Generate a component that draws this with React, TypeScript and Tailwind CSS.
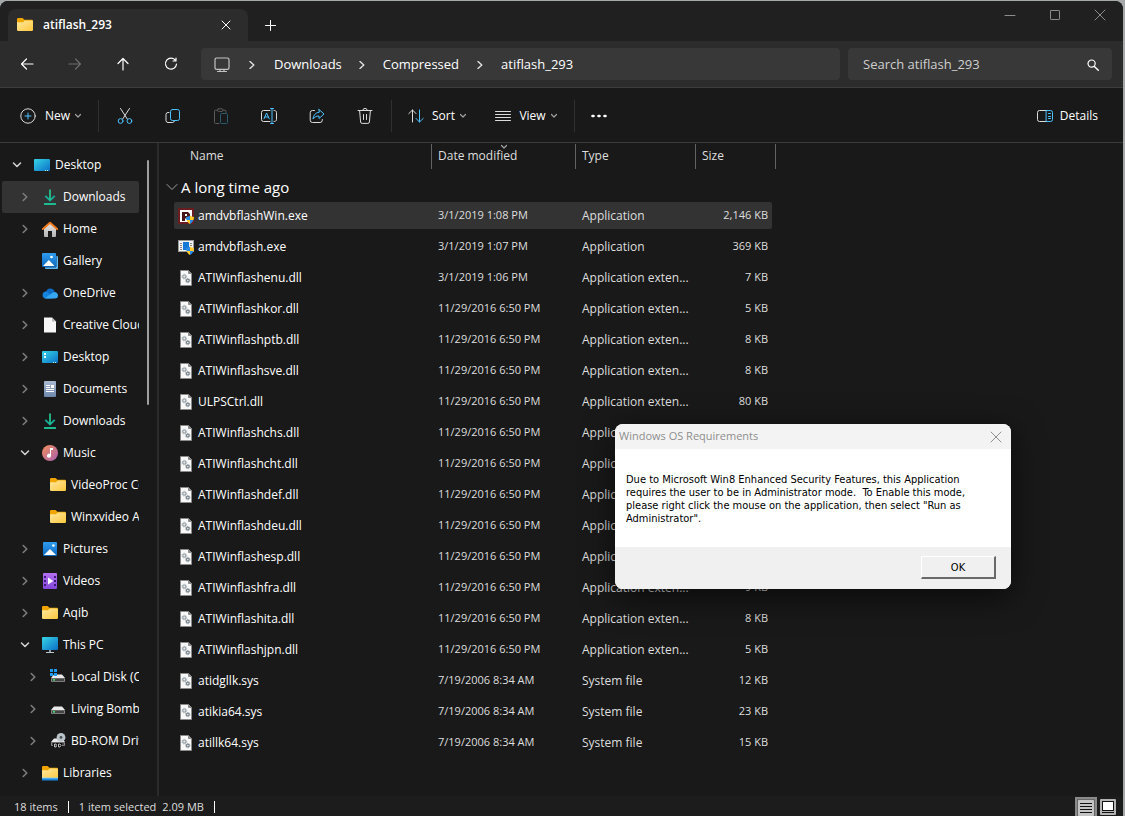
import type { ReactNode } from "react";

type Kind = "desktop" | "folderView" | "download" | "home" | "gallery" | "onedrive" | "blank" | "documents" | "music" | "folder" | "pictures" | "videos" | "pc" | "disk" | "drive" | "bdrom" | "libraries";

const navItems: { label: string; icon: Kind; level: 0 | 1 | 2; state: "open" | "closed" | "none"; active?: boolean }[] = [
  { label: "Desktop", icon: "desktop", level: 0, state: "open" },
  { label: "Downloads", icon: "download", level: 1, state: "closed", active: true },
  { label: "Home", icon: "home", level: 1, state: "closed" },
  { label: "Gallery", icon: "gallery", level: 1, state: "none" },
  { label: "OneDrive", icon: "onedrive", level: 1, state: "closed" },
  { label: "Creative Cloud", icon: "blank", level: 1, state: "closed" },
  { label: "Desktop", icon: "folderView", level: 1, state: "closed" },
  { label: "Documents", icon: "documents", level: 1, state: "closed" },
  { label: "Downloads", icon: "download", level: 1, state: "closed" },
  { label: "Music", icon: "music", level: 1, state: "open" },
  { label: "VideoProc Co", icon: "folder", level: 2, state: "none" },
  { label: "Winxvideo AI", icon: "folder", level: 2, state: "none" },
  { label: "Pictures", icon: "pictures", level: 1, state: "closed" },
  { label: "Videos", icon: "videos", level: 1, state: "closed" },
  { label: "Aqib", icon: "folder", level: 1, state: "closed" },
  { label: "This PC", icon: "pc", level: 1, state: "open" },
  { label: "Local Disk (C", icon: "disk", level: 2, state: "closed" },
  { label: "Living Bomb", icon: "drive", level: 2, state: "closed" },
  { label: "BD-ROM Driv", icon: "bdrom", level: 2, state: "closed" },
  { label: "Libraries", icon: "libraries", level: 1, state: "closed" },
];

const levelPadding = { 0: "pl-[7px]", 1: "pl-[15px]", 2: "pl-[23px]" };

const files = [
  { name: "amdvbflashWin.exe", date: "3/1/2019 1:08 PM", type: "Application", size: "2,146 KB" },
  { name: "amdvbflash.exe", date: "3/1/2019 1:07 PM", type: "Application", size: "369 KB" },
  { name: "ATIWinflashenu.dll", date: "3/1/2019 1:06 PM", type: "Application exten...", size: "7 KB" },
  { name: "ATIWinflashkor.dll", date: "11/29/2016 6:50 PM", type: "Application exten...", size: "5 KB" },
  { name: "ATIWinflashptb.dll", date: "11/29/2016 6:50 PM", type: "Application exten...", size: "8 KB" },
  { name: "ATIWinflashsve.dll", date: "11/29/2016 6:50 PM", type: "Application exten...", size: "8 KB" },
  { name: "ULPSCtrl.dll", date: "11/29/2016 6:50 PM", type: "Application exten...", size: "80 KB" },
  { name: "ATIWinflashchs.dll", date: "11/29/2016 6:50 PM", type: "Application exten...", size: "5 KB" },
  { name: "ATIWinflashcht.dll", date: "11/29/2016 6:50 PM", type: "Application exten...", size: "5 KB" },
  { name: "ATIWinflashdef.dll", date: "11/29/2016 6:50 PM", type: "Application exten...", size: "8 KB" },
  { name: "ATIWinflashdeu.dll", date: "11/29/2016 6:50 PM", type: "Application exten...", size: "9 KB" },
  { name: "ATIWinflashesp.dll", date: "11/29/2016 6:50 PM", type: "Application exten...", size: "8 KB" },
  { name: "ATIWinflashfra.dll", date: "11/29/2016 6:50 PM", type: "Application exten...", size: "9 KB" },
  { name: "ATIWinflashita.dll", date: "11/29/2016 6:50 PM", type: "Application exten...", size: "8 KB" },
  { name: "ATIWinflashjpn.dll", date: "11/29/2016 6:50 PM", type: "Application exten...", size: "5 KB" },
  { name: "atidgllk.sys", date: "7/19/2006 8:34 AM", type: "System file", size: "12 KB" },
  { name: "atikia64.sys", date: "7/19/2006 8:34 AM", type: "System file", size: "23 KB" },
  { name: "atillk64.sys", date: "7/19/2006 8:34 AM", type: "System file", size: "15 KB" },
];

// Shared gradients, referenced by id from the small icons
const Gradients = () => (
  <svg width="0" height="0" className="absolute" aria-hidden="true">
    <defs>
      <linearGradient id="gFolder" x1="0" y1="0" x2="1" y2="1">
        <stop offset="0" stopColor="#ffe9a2" />
        <stop offset="1" stopColor="#ffc83d" />
      </linearGradient>
      <linearGradient id="gDesk" x1="0" y1="0" x2="1" y2="1">
        <stop offset="0" stopColor="#36d5e6" />
        <stop offset="1" stopColor="#0b6fc8" />
      </linearGradient>
      <linearGradient id="gMusic" x1="0" y1="0" x2="1" y2="1">
        <stop offset="0" stopColor="#f4905a" />
        <stop offset="1" stopColor="#a95fae" />
      </linearGradient>
      <linearGradient id="gDoc" x1="0" y1="0" x2="0" y2="1">
        <stop offset="0" stopColor="#a9bad2" />
        <stop offset="1" stopColor="#6d87ab" />
      </linearGradient>
      <linearGradient id="gPic" x1="0" y1="0" x2="0" y2="1">
        <stop offset="0" stopColor="#2f9df0" />
        <stop offset="1" stopColor="#0c68c0" />
      </linearGradient>
      <linearGradient id="gVid" x1="0" y1="0" x2="0" y2="1">
        <stop offset="0" stopColor="#b46ff0" />
        <stop offset="1" stopColor="#8347dc" />
      </linearGradient>
      <linearGradient id="gHome" x1="0" y1="0" x2="0" y2="1">
        <stop offset="0" stopColor="#e6e6e6" />
        <stop offset="1" stopColor="#b4b4b4" />
      </linearGradient>
    </defs>
  </svg>
);

const FolderShape = () => (
  <>
    <path d="M0 2.2A1.2 1.2 0 0 1 1.2 1H5.6L7.4 2.8H14.8A1.2 1.2 0 0 1 16 4V7H0Z" fill="#f0a500" />
    <path d="M0 5.2H6L7.8 3.4H14.8A1.2 1.2 0 0 1 16 4.6V12.8A1.2 1.2 0 0 1 14.8 14H1.2A1.2 1.2 0 0 1 0 12.8Z" fill="url(#gFolder)" />
  </>
);

const DriveShape = () => (
  <>
    <path d="M4 5.5H12L15 9H1Z" fill="#e9e9e9" />
    <rect x="1" y="9" width="14" height="4" rx="1" fill="#8a8a8a" />
    <rect x="2" y="9.6" width="12" height="2.6" fill="#444" />
    <rect x="3" y="10" width="2" height="1.6" fill="#3ee06a" />
  </>
);

const icons: Record<Kind, ReactNode> = {
  desktop: (
    <>
      <rect y="2" width="16" height="12" rx="1" fill="url(#gDesk)" />
      <path d="M11 13.5H12M13 13.5H14" stroke="#c8ecff" />
    </>
  ),
  folderView: (
    <>
      <rect y="2" width="16" height="12" rx="1" fill="url(#gDesk)" />
      <path d="M2 4H4V6H2ZM2 7H4V9H2Z" fill="#e9fbff" />
      <path d="M11 13.5H12M13 13.5H14" stroke="#c8ecff" />
    </>
  ),
  download: (
    <>
      <path d="M3.3 6.8L8 11.4L12.7 6.8" stroke="#14ad97" strokeWidth="1.8" fill="none" />
      <path d="M8 0.5V11" stroke="#25c08f" strokeWidth="1.8" />
      <rect x="2" y="14" width="12" height="2" rx="0.5" fill="#1dbb8d" />
    </>
  ),
  home: (
    <>
      <path d="M2 7L8 2L14 7V15A1 1 0 0 1 13 16H10V10H6V16H3A1 1 0 0 1 2 15Z" fill="url(#gHome)" />
      <path d="M0.9 8L8 1.8L15.1 8" stroke="#f07a1c" strokeWidth="2" strokeLinejoin="round" strokeLinecap="round" fill="none" />
    </>
  ),
  gallery: (
    <>
      <path d="M3 3H15A1 1 0 0 1 16 4V15A1 1 0 0 1 15 16H4A1 1 0 0 1 3 15Z" fill="#5db8f5" />
      <path d="M14 2V14H3" stroke="#0d3f70" fill="none" />
      <rect width="14" height="14" rx="1" fill="url(#gPic)" />
      <path d="M1 13L6.8 7L12.6 13Z" fill="#fff" />
      <circle cx="9.5" cy="4" r="1.3" fill="#fff" />
    </>
  ),
  onedrive: (
    <>
      <path d="M4 7A4.6 4.6 0 0 1 12.6 6L9 12H3Z" fill="#0f6cc4" />
      <path d="M3.6 13.5A3.5 3.5 0 0 1 3.4 6.6C5.6 6.4 8 8.5 10.5 13.5Z" fill="#1584dd" />
      <path d="M3 13.3L10.5 7.8C12.4 6.2 16 7.4 16 10.5A3 3 0 0 1 13 13.5H3.6Z" fill="#36a8f2" />
    </>
  ),
  blank: (
    <>
      <path d="M2 0.5H10L14 4.5V15.5H2Z" fill="#f7f7f7" />
      <path d="M10 0.5V4.5H14Z" fill="#b9b9b9" />
    </>
  ),
  documents: (
    <>
      <rect x="2" width="12" height="16" rx="1" fill="url(#gDoc)" />
      <path d="M4 4.5H8M4 6.5H8M4 8.5H12M4 10.5H12" stroke="#fff" />
      <rect x="9" y="4" width="3" height="3" fill="#fff" />
    </>
  ),
  music: (
    <>
      <circle cx="8" cy="8" r="8" fill="url(#gMusic)" />
      <path d="M8 3H11V5H9V10.5A2 2 0 1 1 8 9Z" fill="#fff" />
    </>
  ),
  folder: <FolderShape />,
  pictures: (
    <>
      <rect x="1" y="1" width="14" height="14" rx="1" fill="url(#gPic)" />
      <path d="M2 14L8 8L14 14Z" fill="#fff" />
      <circle cx="11.4" cy="4.6" r="1.4" fill="#e7f5ff" />
    </>
  ),
  videos: (
    <>
      <rect x="1" width="14" height="16" rx="1" fill="url(#gVid)" />
      <path d="M2 3H4V5H2ZM2 7H4V9H2ZM2 11H4V13H2ZM12 3H14V5H12ZM12 7H14V9H12ZM12 11H14V13H12Z" fill="#3c1c78" />
      <path d="M6 4.6L11.4 8L6 11.4Z" fill="#fff" />
    </>
  ),
  pc: (
    <>
      <rect width="16" height="13" rx="1" fill="url(#gDesk)" />
      <path d="M7 13H9V15H7Z" fill="#8aa0ab" />
      <path d="M4 15.5H12" stroke="#b8c8d0" />
    </>
  ),
  disk: (
    <>
      <DriveShape />
      <path d="M0 0H3V3H0ZM4 0H7V3H4ZM0 4H3V7H0ZM4 4H7V7H4Z" fill="#1d9bf0" />
    </>
  ),
  drive: <DriveShape />,
  bdrom: (
    <>
      <DriveShape />
      <circle cx="11" cy="4.4" r="4.4" fill="#b9c3c9" />
      <circle cx="11" cy="4.4" r="1.4" fill="#4a4f52" />
      <rect x="3" y="10" width="9" height="5" fill="#0c0c0c" />
      <path d="M4.5 11V14H6.2V11ZM8.5 11H10L11 12.5L10 14H8.5Z" stroke="#e8e8e8" strokeWidth="0.8" fill="none" />
    </>
  ),
  libraries: (
    <>
      <FolderShape />
      <path d="M0 13H16V15.5H0Z" fill="#1b86dd" />
      <path d="M0 13H16" stroke="#8fd0ff" strokeWidth="0.8" />
    </>
  ),
};

const Icon16 = ({ kind }: { kind: Kind }) => (
  <svg width="16" height="16" viewBox="0 0 16 16" className="shrink-0" aria-hidden="true">
    {icons[kind]}
  </svg>
);

const Shield = () => (
  <>
    <path d="M8 9C9.5 9 10.7 8.6 12 7.6V12H8.6C8.2 11.2 8 10.2 8 9ZM12 12H15.4C14.8 13.8 13.8 15 12 16Z" fill="#2a8ce8" />
    <path d="M12 7.6C13.3 8.6 14.5 9 16 9C16 10.2 15.8 11.2 15.4 12H12ZM12 12V16C10.2 15 9.2 13.8 8.6 12Z" fill="#ffcb2d" />
  </>
);

const FileIcon = ({ name }: { name: string }) => (
  <svg width="16" height="16" viewBox="0 0 16 16" className="shrink-0" aria-hidden="true">
    {name === "amdvbflashWin.exe" ? (
      <>
        <rect width="16" height="16" fill="#6a1c20" />
        <rect x="2" y="2" width="12" height="12" fill="#fff" />
        <path d="M4 4H10L12 6V8.5L10 10.5H7V13H4Z" fill="#4a1518" />
        <path d="M7 6H9V8H7Z" fill="#fff" />
        <Shield />
      </>
    ) : name === "amdvbflash.exe" ? (
      <>
        <rect x="0.5" y="1.5" width="15" height="11" fill="#f3f3f3" stroke="#9a9a9a" />
        <path d="M2 4.5H4M2 6.5H4M2 8.5H4M2 10.5H4M12 4.5H14M12 6.5H14" stroke="#888" />
        <rect x="5" y="3" width="6" height="8" fill="#1679d8" />
        <Shield />
      </>
    ) : (
      <>
        <path d="M2.5 0.5H10.5L13.5 3.5V15.5H2.5Z" fill="#f8f8f8" stroke="#8a8a8a" />
        <path d="M10.5 0.5V3.5H13.5Z" fill="#8a8a8a" stroke="#8a8a8a" />
        <circle cx="6.3" cy="6.6" r="2.4" fill="none" stroke="#b4bbc0" strokeDasharray="1 0.9" />
        <circle cx="6.3" cy="6.6" r="1.6" fill="#e9ecee" stroke="#9aa3a9" strokeWidth="1.2" />
        <circle cx="9.8" cy="10.6" r="2.2" fill="none" stroke="#9aa3a9" strokeDasharray="1 0.75" />
        <circle cx="9.8" cy="10.6" r="1.4" fill="#e9ecee" stroke="#7b858c" strokeWidth="1.2" />
      </>
    )}
  </svg>
);

const Glyph = ({ children, size = 16, className = "" }: { children: ReactNode; size?: number; className?: string }) => (
  <svg width={size} height={size} viewBox={`0 0 ${size} ${size}`} fill="none" stroke="currentColor" strokeLinecap="round" strokeLinejoin="round" className={`shrink-0 ${className}`} aria-hidden="true">
    {children}
  </svg>
);

const SmallChevron = () => (
  <Glyph size={8} className="text-[#a0a0a0]">
    <path d="M1.5 2.5L4 5L6.5 2.5" strokeWidth="1.2" />
  </Glyph>
);

const CrumbChevron = () => (
  <Glyph size={8} className="text-[#e0e0e0]">
    <path d="M2 0.5L5.8 4L2 7.5" strokeWidth="1.4" />
  </Glyph>
);

const TitleBar = () => (
  <header className="flex h-10 items-end bg-[#202020] pl-2">
    <div className="flex h-8 w-60 items-center rounded-t-lg bg-[#2c2c2c] pl-[9px] pr-4">
      <Icon16 kind="folder" />
      <h1 className="ml-[10px] flex-1 text-[12px] font-semibold text-white">atiflash_293</h1>
      <button aria-label="Close tab">
        <Glyph size={12}>
          <path d="M2 2L10 10M10 2L2 10" />
        </Glyph>
      </button>
    </div>
    <button aria-label="New tab" className="ml-[15px] flex h-8 items-center">
      <Glyph size={15}>
        <path d="M7.5 2.5V12.5M2.5 7.5H12.5" />
      </Glyph>
    </button>
    <div className="ml-auto flex self-start pr-px text-[#8c8c8c]">
      <button aria-label="Minimize" className="flex h-7 w-[45px] items-center justify-center">
        <Glyph size={12}>
          <path d="M1 6.5H11" />
        </Glyph>
      </button>
      <button aria-label="Maximize" className="flex h-7 w-[45px] items-center justify-center">
        <Glyph size={12}>
          <rect x="1.5" y="1.5" width="9" height="9" rx="0.6" />
        </Glyph>
      </button>
      <button aria-label="Close" className="flex h-7 w-[45px] items-center justify-center">
        <Glyph size={12}>
          <path d="M1 1L11 11M11 1L1 11" />
        </Glyph>
      </button>
    </div>
  </header>
);

const AddressBar = () => (
  <div className="flex h-[47px] items-center border-b border-[#3d3d3d] bg-[#2c2c2c] pl-[3px] pr-[11px] text-[13px]">
    <button aria-label="Back" className="flex w-12 justify-center">
      <Glyph><path d="M2.5 8H14M7.5 3L2.5 8L7.5 13" strokeWidth="1.2" /></Glyph>
    </button>
    <button aria-label="Forward" className="flex w-12 justify-center text-[#6c6c6c]">
      <Glyph><path d="M2 8H13.5M8.5 3L13.5 8L8.5 13" strokeWidth="1.2" /></Glyph>
    </button>
    <button aria-label="Up" className="flex w-12 justify-center">
      <Glyph><path d="M8 14V2.5M3 7.5L8 2.5L13 7.5" strokeWidth="1.2" /></Glyph>
    </button>
    <button aria-label="Refresh" className="flex w-12 justify-center">
      <Glyph><path d="M12.6 4.6A5.5 5.5 0 1 0 13.5 8M13 2V5H10" strokeWidth="1.2" /></Glyph>
    </button>
    <nav aria-label="Address" className="ml-[6px] flex h-8 flex-1 items-center rounded bg-[#383838] pl-[13px] pt-px">
      <Glyph className="mr-[18px] text-[#c4c4c4]">
        <rect x="1" y="1" width="14" height="11.4" rx="1.6" strokeWidth="1.2" />
        <path d="M6 12.5V14.5M10 12.5V14.5M3.5 14.5H12.5" strokeWidth="1.2" />
      </Glyph>
      <CrumbChevron />
      <button className="ml-[18px] mr-4">Downloads</button>
      <CrumbChevron />
      <button className="ml-[17px] mr-[17px]">Compressed</button>
      <CrumbChevron />
      <button className="ml-[17px]">atiflash_293</button>
    </nav>
    <label className="ml-2 flex h-8 w-[264px] items-center rounded bg-[#383838] pl-[15px] pr-[13px] pt-px">
      <input type="search" aria-label="Search atiflash_293" placeholder="Search atiflash_293" className="min-w-0 flex-1 bg-transparent outline-none placeholder:text-[#cfcfcf]" />
      <Glyph size={12}>
        <circle cx="4.6" cy="4.6" r="3.6" strokeWidth="1.2" />
        <path d="M7.4 7.4L11.3 11.3" strokeWidth="1.4" />
      </Glyph>
    </label>
  </div>
);

const ToolButton = ({ label, children }: { label: string; children: ReactNode }) => (
  <button aria-label={label} className="flex w-12 justify-center text-[#dcdcdc]">
    <Glyph>{children}</Glyph>
  </button>
);

const Toolbar = () => (
  <div className="flex h-[55px] items-center border-b border-[#3a3a3a] pl-5 pr-[25px] pt-px text-[12px]">
    <button className="flex items-center">
      <Glyph className="text-[#dcdcdc]">
        <circle cx="8" cy="8" r="7.2" />
        <path d="M8 5V11M5 8H11" stroke="#4cc2ff" />
      </Glyph>
      <span className="ml-[9px] w-[25px]">New</span>
      <span className="ml-1"><SmallChevron /></span>
    </button>
    <div className="ml-4 mr-[2px] h-8 w-px bg-[#303030]" />
    <ToolButton label="Cut">
      <path d="M3.5 0.5L10.3 11M12.5 0.5L5.7 11" />
      <circle cx="3.6" cy="13" r="2.4" stroke="#4cc2ff" />
      <circle cx="12.4" cy="13" r="2.4" stroke="#4cc2ff" />
    </ToolButton>
    <ToolButton label="Copy">
      <path d="M4 4.5H3A2 2 0 0 0 1 6.5V12.5A2 2 0 0 0 3 14.5H7.5A2 2 0 0 0 9.5 13" />
      <rect x="5.5" y="1.5" width="9" height="11" rx="2" stroke="#4cc2ff" />
    </ToolButton>
    <ToolButton label="Paste">
      <path d="M4.5 2.2H2.5A1 1 0 0 0 1.5 3.2V14.5A1 1 0 0 0 2.5 15.5H6M10.5 2.2H12A1 1 0 0 1 13 3.2V4.5" stroke="#5a5a5a" />
      <rect x="4.5" y="0.8" width="5.5" height="2.6" rx="1" stroke="#5a5a5a" />
      <rect x="7.5" y="5.5" width="7" height="10" rx="1" stroke="#2b5a70" />
    </ToolButton>
    <ToolButton label="Rename">
      <path d="M9 2.5H2.5A2 2 0 0 0 0.5 4.5V11.5A2 2 0 0 0 2.5 13.5H9M13 2.5A2 2 0 0 1 15.5 4.5V11.5A2 2 0 0 1 13 13.5" />
      <path d="M3 10.8L5.6 5L8.2 10.8M4 9H7.2M9.5 0.5H12.5M9.5 15.5H12.5M11 0.5V15.5" stroke="#4cc2ff" />
    </ToolButton>
    <ToolButton label="Share">
      <path d="M5.5 2.5H3.5A2.3 2.3 0 0 0 1.2 4.8V12.2A2.3 2.3 0 0 0 3.5 14.5H11A2.3 2.3 0 0 0 13.3 12.2V11.5" />
      <path d="M10 1.5L15 6L10 10.5V8C7 8 5.3 9 4 11C4.2 7.5 6.5 4.5 10 4.2Z" stroke="#4cc2ff" />
    </ToolButton>
    <ToolButton label="Delete">
      <path d="M1 2.5H15M5.8 2.5A2.2 2.2 0 0 1 10.2 2.5M2.6 2.5L3.6 14A1.6 1.6 0 0 0 5.2 15.4H10.8A1.6 1.6 0 0 0 12.4 14L13.4 2.5M6.5 6.5V11.5M9.5 6.5V11.5" />
    </ToolButton>
    <div className="ml-[2px] h-8 w-px bg-[#303030]" />
    <button className="ml-4 flex items-center">
      <Glyph className="text-[#dcdcdc]">
        <path d="M4.5 14V2M0.8 5.6L4.5 2L8 5.6" />
        <path d="M11.5 2V14M8 10.4L11.5 14L15.2 10.4" stroke="#4cc2ff" />
      </Glyph>
      <span className="ml-2 w-[23px]">Sort</span>
      <span className="ml-1"><SmallChevron /></span>
    </button>
    <button className="ml-7 flex items-center">
      <Glyph className="text-[#dcdcdc]">
        <path d="M0.5 3.5H15.5M0.5 6.5H15.5M0.5 9.5H15.5M0.5 12.5H15.5" />
      </Glyph>
      <span className="ml-2 w-[27px]">View</span>
      <span className="ml-1"><SmallChevron /></span>
    </button>
    <div className="ml-4 h-8 w-px bg-[#303030]" />
    <button aria-label="See more" className="ml-4">
      <Glyph>
        <path d="M1.5 8H2.5M7.5 8H8.5M13.5 8H14.5" strokeWidth="2.6" />
      </Glyph>
    </button>
    <button className="ml-auto flex items-center">
      <Glyph className="mr-[7px] text-[#dcdcdc]">
        <path d="M9.5 2.5H2.5A2 2 0 0 0 0.5 4.5V11.5A2 2 0 0 0 2.5 13.5H9.5" />
        <path d="M9.5 2.5H13.5A2 2 0 0 1 15.5 4.5V11.5A2 2 0 0 1 13.5 13.5H9.5ZM11.5 5.5H13.5M11.5 8.5H13.5M11.5 10.5H13.5" stroke="#4cc2ff" />
      </Glyph>
      Details
    </button>
  </div>
);

const Sidebar = () => (
  <nav aria-label="Folders" className="flex w-[157px] shrink-0 items-start pl-[2px] pt-[6px]">
    <ul className="w-[137px] text-[12px]">
      {navItems.map((item, i) => (
        <li key={i} className="h-8">
          <button className={`flex h-full w-full items-center overflow-hidden whitespace-nowrap rounded-xs ${levelPadding[item.level]} ${item.active ? "bg-[#333333]" : ""}`}>
            <span className="mr-[9px] flex w-4 shrink-0 justify-center">
              {item.state === "open" && (
                <Glyph size={10} className="text-[#cfcfcf]"><path d="M1.5 3L5 6.5L8.5 3" strokeWidth="1.6" /></Glyph>
              )}
              {item.state === "closed" && (
                <Glyph size={10} className="text-[#7c7c7c]"><path d="M3.2 1.5L6.8 5L3.2 8.5" strokeWidth="1.6" /></Glyph>
              )}
            </span>
            <Icon16 kind={item.icon} />
            <span className="ml-[5px]">{item.label}</span>
          </button>
        </li>
      ))}
    </ul>
    <div className="ml-2 mt-[11px] h-[245px] w-[2px] rounded bg-[#9f9f9f]" />
  </nav>
);

const FileTable = () => (
  <table className="w-[617px] table-fixed border-collapse text-[12px] text-[#dedede]">
    <colgroup>
      <col className="w-[272px]" />
      <col className="w-[144px]" />
      <col className="w-[120px]" />
      <col className="w-[81px]" />
    </colgroup>
    <thead>
      <tr className="h-[26px] text-left">
        <th className="p-0 pl-[31px] font-normal">Name</th>
        <th className="p-0 font-normal">
          <div className="relative flex h-[25px] items-center border-l border-[#636363] pl-[6px]">
            <span className="absolute -top-px left-1/2 -translate-x-1/2"><SmallChevron /></span>
            Date modified
          </div>
        </th>
        <th className="p-0 font-normal">
          <div className="flex h-[25px] items-center border-l border-[#636363] pl-[6px]">Type</div>
        </th>
        <th className="p-0 font-normal">
          <div className="flex h-[25px] items-center border-x border-[#636363] pl-[6px]">Size</div>
        </th>
      </tr>
    </thead>
    <tbody>
      <tr className="h-[31px]">
        <th colSpan={4} className="p-0 pl-[7px] pt-1 text-left font-normal text-white">
          <button className="flex items-center text-[15px] leading-5">
            <Glyph size={12} className="mr-[3px] text-[#a0a0a0]"><path d="M1 3.5L6 8.5L11 3.5" /></Glyph>
            A long time ago
          </button>
        </th>
      </tr>
      {files.map((file, i) => {
        const bg = i === 0 ? "bg-[#333333]" : "";
        return (
          <tr key={file.name} className="h-[31px] whitespace-nowrap">
            <td className="p-0 pl-[15px]">
              <div className={`flex h-[27px] items-center rounded-l-xs pl-1 text-white ${bg}`}>
                <FileIcon name={file.name} />
                <span className="ml-1">{file.name}</span>
              </div>
            </td>
            <td className="p-0 text-[11px]">
              <div className={`flex h-[27px] items-center pl-[7px] ${bg}`}>{file.date}</div>
            </td>
            <td className="p-0">
              <div className={`flex h-[27px] items-center pl-[7px] ${bg}`}>{file.type}</div>
            </td>
            <td className="p-0 pr-1 text-[11px]">
              <div className={`flex h-[27px] items-center justify-end rounded-r-xs pr-1 ${bg}`}>{file.size}</div>
            </td>
          </tr>
        );
      })}
    </tbody>
  </table>
);

const StatusBar = () => (
  <footer className="flex h-5 items-center bg-[#1c1c1c] pl-[14px] pr-[7px] pt-[2px] text-[11px] text-[#dedede]">
    <span>18 items</span>
    <span className="mx-[10px] h-3 w-px bg-white" />
    <span>1 item selected</span>
    <span className="ml-[6px]">2.09 MB</span>
    <span className="ml-[10px] h-3 w-px bg-white" />
    <div className="ml-auto flex items-center gap-[3px]">
      <button aria-label="Details view" className="flex h-5 w-[22px] items-center justify-center border-2 border-b-0 border-[#8a8a8a] bg-[#686868]">
        <svg width="16" height="16" viewBox="0 0 16 16" aria-hidden="true">
          <rect width="16" height="16" rx="1" fill="#c4c4c4" />
          <path d="M2 3.5H14M2 6.5H14M2 9.5H14M2 12.5H14" stroke="#111" />
        </svg>
      </button>
      <button aria-label="Large icons">
        <svg width="16" height="16" viewBox="0 0 16 16" aria-hidden="true">
          <rect width="16" height="16" rx="1" fill="#b4b4b4" />
          <rect x="2.5" y="2.5" width="11" height="9" fill="#fff" stroke="#111" />
          <path d="M2 13.5H14" stroke="#111" />
        </svg>
      </button>
    </div>
  </footer>
);

const RequirementsDialog = () => (
  <div role="dialog" aria-labelledby="dialog-title" className="absolute left-[615px] top-[424px] w-[396px] overflow-hidden rounded-lg bg-white text-black shadow-[0_8px_32px_rgba(0,0,0,0.6)]">
    <div className="flex h-[25px] items-center justify-between bg-[#f3f3f3] pl-1 pr-[9px] text-[#8e8e8e]">
      <h2 id="dialog-title" className="text-[11px]">Windows OS Requirements</h2>
      <button aria-label="Close dialog">
        <Glyph size={12}><path d="M1 1L11 11M11 1L1 11" /></Glyph>
      </button>
    </div>
    <p className="h-[98px] whitespace-pre-line pl-[11px] pt-6 font-['DejaVu_Sans_Condensed','DejaVu_Sans',sans-serif] text-[11px] leading-[13px]">
      Due to Microsoft Win8 Enhanced Security Features, this Application{"\n"}
      requires the user to be in Administrator mode.{"\u00a0 "}To Enable this mode,{"\n"}
      please right click the mouse on the application, then select "Run as{"\n"}
      Administrator".
    </p>
    <div className="flex h-[42px] justify-end bg-[#f0f0f0] pr-[15px] pt-[9px]">
      <button className="h-[23px] w-[75px] border-b-2 border-l border-r-2 border-t border-b-[#696969] border-l-white border-r-[#696969] border-t-white bg-[#f0f0f0] font-['DejaVu_Sans_Condensed','DejaVu_Sans',sans-serif] text-[11px] leading-[13px]">
        OK
      </button>
    </div>
  </div>
);

export default function App() {
  return (
    <div className="relative min-h-screen bg-[#a5a9aa] pr-[2px] pt-px font-['Open_Sans',sans-serif] text-white">
      <Gradients />
      <div className="flex min-h-[calc(100vh-1px)] flex-col overflow-hidden rounded-t-lg bg-[#191919]">
        <TitleBar />
        <AddressBar />
        <Toolbar />
        <main className="flex flex-1">
          <Sidebar />
          <div className="flex-1 border-l-2 border-[#2b2b2b]">
            <FileTable />
          </div>
        </main>
        <StatusBar />
      </div>
      <RequirementsDialog />
    </div>
  );
}
